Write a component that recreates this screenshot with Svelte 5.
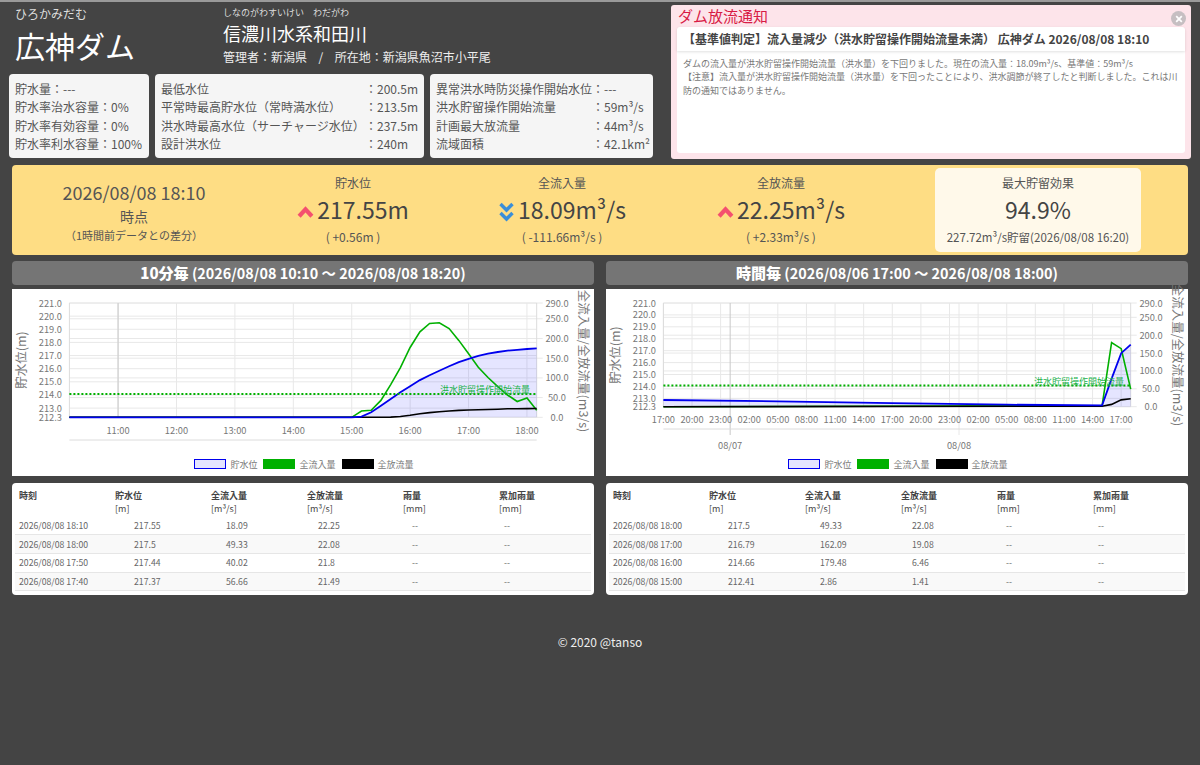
<script lang="ts">
  // hourly / ten-minute series for the two dam charts
  const tenMinInflow = [[0,0],[290,0],[300,16],[310,18],[320,43],[330,83],[340,126],[350,177],[360,217],[370,238],[380,240],[390,225],[400,195],[410,161],[420,127],[430,101],[440,78],[450,56.66],[460,40.02],[470,49.33],[480,18.09]];
  const tenMinLevel = [[0,212.3],[290,212.3],[300,212.35],[310,212.68],[320,213.18],[330,213.69],[340,214.2],[350,214.66],[360,215.13],[370,215.5],[380,215.84],[390,216.19],[400,216.5],[410,216.75],[420,216.98],[430,217.14],[440,217.27],[450,217.37],[460,217.44],[470,217.5],[480,217.55]];
  const tenMinOutflow = [[0,0],[330,0.5],[340,2],[350,5],[360,9],[370,12],[380,14],[390,16],[400,17.5],[410,18.4],[420,19.1],[430,19.8],[440,20.5],[450,21.49],[460,21.8],[470,22.08],[480,22.25]];

  const hourInflow = [[0,0],[46,2.86],[47,179.48],[48,162.09],[49,49.33]];
  const hourLevel = [[0,212.86],[12,212.75],[24,212.6],[36,212.47],[46,212.41],[47,214.66],[48,216.79],[49,217.5]];
  const hourOutflow = [[0,0],[46,1.41],[47,6.46],[48,19.08],[49,22.08]];

  const levelTicks = [221, 220, 219, 218, 217, 216, 215, 214, 213, 212.3];
  const flowTicks = [290, 250, 200, 150, 100, 50, 0];

  const charts = [
    {
      title: "10分毎",
      range: "(2026/08/08 10:10 〜 2026/08/08 18:20)",
      span: 480,
      bottom: 128.3,
      axisY: 151,
      tickY: 145,
      titleY: 71,
      rightTitleY: 72,
      xTicks: ["11:00", "12:00", "13:00", "14:00", "15:00", "16:00", "17:00", "18:00"].map((t, i) => ({ t, at: 50 + i * 60 })),
      dayLines: [{ t: "", at: 50, cls: "day" }],
      inflow: tenMinInflow,
      level: tenMinLevel,
      outflow: tenMinOutflow,
      rows: [
        ["2026/08/08 18:10", "217.55", "18.09", "22.25"],
        ["2026/08/08 18:00", "217.5", "49.33", "22.08"],
        ["2026/08/08 17:50", "217.44", "40.02", "21.8"],
        ["2026/08/08 17:40", "217.37", "56.66", "21.49"],
      ],
    },
    {
      title: "時間毎",
      range: "(2026/08/06 17:00 〜 2026/08/08 18:00)",
      span: 49,
      bottom: 117.7,
      axisY: 140,
      tickY: 134,
      titleY: 66,
      rightTitleY: 66,
      xTicks: ["17:00", "20:00", "23:00", "02:00", "05:00", "08:00", "11:00", "14:00", "17:00", "20:00", "23:00", "02:00", "05:00", "08:00", "11:00", "14:00", "17:00"].map((t, i) => ({ t, at: i * 3 })),
      dayLines: [{ t: "08/07", at: 7, cls: "day" }, { t: "08/08", at: 31, cls: "grid" }],
      inflow: hourInflow,
      level: hourLevel,
      outflow: hourOutflow,
      rows: [
        ["2026/08/08 18:00", "217.5", "49.33", "22.08"],
        ["2026/08/08 17:00", "216.79", "162.09", "19.08"],
        ["2026/08/08 16:00", "214.66", "179.48", "6.46"],
        ["2026/08/08 15:00", "212.41", "2.86", "1.41"],
      ],
    },
  ];

  const X0 = 57.4;
  const X1 = 524.7;
  const TOP = 14;

  const sx = (c, v) => X0 + (v / c.span) * (X1 - X0);
  const syLevel = (c, v) => TOP + ((221 - v) / 8.7) * (c.bottom - TOP);
  const syFlow = (c, v) => TOP + ((290 - v) / 290) * (c.bottom - TOP);
  const linePts = (c, data, sy) => data.map(([x, y]) => `${sx(c, x).toFixed(1)},${sy(c, y).toFixed(1)}`).join(" ");
  const areaPts = (c) => `${X0},${c.bottom} ${linePts(c, c.level, syLevel)} ${X1},${c.bottom}`;
</script>

<div class="page">
  <div class="top">
    <div class="top-left">
      <header class="head">
        <div class="dam">
          <div class="kana">ひろかみだむ</div>
          <h1>広神ダム</h1>
        </div>
        <div class="river">
          <div class="river-kana">しなのがわすいけい　わだがわ</div>
          <div class="river-name">信濃川水系和田川</div>
          <div class="river-sub">管理者&#xFF1A;新潟県<span class="sep">/</span>所在地&#xFF1A;新潟県魚沼市小平尾</div>
        </div>
      </header>
      <div class="infos">
        <div class="info info-a">
          <div>貯水量&#xFF1A;---</div>
          <div>貯水率治水容量&#xFF1A;0%</div>
          <div>貯水率有効容量&#xFF1A;0%</div>
          <div>貯水率利水容量&#xFF1A;100%</div>
        </div>
        <div class="info info-b">
          <span>最低水位</span><span>&#xFF1A;200.5m</span>
          <span>平常時最高貯水位&#xFF08;常時満水位&#xFF09;</span><span>&#xFF1A;213.5m</span>
          <span>洪水時最高水位&#xFF08;サーチャージ水位&#xFF09;</span><span>&#xFF1A;237.5m</span>
          <span>設計洪水位</span><span>&#xFF1A;240m</span>
        </div>
        <div class="info info-c">
          <span>異常洪水時防災操作開始水位</span><span>&#xFF1A;---</span>
          <span>洪水貯留操作開始流量</span><span>&#xFF1A;59m³/s</span>
          <span>計画最大放流量</span><span>&#xFF1A;44m³/s</span>
          <span>流域面積</span><span>&#xFF1A;42.1km²</span>
        </div>
      </div>
    </div>

    <aside class="alert">
      <div class="alert-title">ダム放流通知</div>
      <button class="close" aria-label="close">
        <svg viewBox="0 0 10 10" width="8" height="8"><path d="M1.5 1.5 8.5 8.5M8.5 1.5 1.5 8.5" stroke="#fff" stroke-width="2.2" /></svg>
      </button>
      <div class="alert-card">
        <div class="alert-head">【基準値判定】流入量減少&#xFF08;洪水貯留操作開始流量未満&#xFF09; 広神ダム 2026/08/08 18:10</div>
        <div class="alert-body">
          ダムの流入量が洪水貯留操作開始流量&#xFF08;洪水量&#xFF09;を下回りました。現在の流入量&#xFF1A;18.09m³/s、基準値&#xFF1A;59m³/s<br />
          【注意】流入量が洪水貯留操作開始流量&#xFF08;洪水量&#xFF09;を下回ったことにより、洪水調節が終了したと判断しました。これは川防の通知ではありません。
        </div>
      </div>
    </aside>
  </div>

  <section class="band">
    <div class="stat when">
      <div class="when-date">2026/08/08 18:10</div>
      <div class="when-at">時点</div>
      <div class="when-note">&#xFF08;1時間前データとの差分&#xFF09;</div>
    </div>
    <div class="stat">
      <div class="stat-label">貯水位</div>
      <div class="stat-value">
        <svg class="chev" viewBox="0 0 16 12"><path d="M2 10 8 3.5 14 10" fill="none" stroke="#f4506f" stroke-width="4" /></svg>217.55m
      </div>
      <div class="stat-diff">( +0.56m )</div>
    </div>
    <div class="stat">
      <div class="stat-label">全流入量</div>
      <div class="stat-value">
        <svg class="chev" viewBox="0 0 16 20"><path d="M2 2 8 8 14 2M2 11 8 17 14 11" fill="none" stroke="#3a8ed8" stroke-width="3.4" /></svg>18.09m³/s
      </div>
      <div class="stat-diff">( -111.66m³/s )</div>
    </div>
    <div class="stat">
      <div class="stat-label">全放流量</div>
      <div class="stat-value">
        <svg class="chev" viewBox="0 0 16 12"><path d="M2 10 8 3.5 14 10" fill="none" stroke="#f4506f" stroke-width="4" /></svg>22.25m³/s
      </div>
      <div class="stat-diff">( +2.33m³/s )</div>
    </div>
    <div class="stat best">
      <div class="stat-label">最大貯留効果</div>
      <div class="stat-value">94.9%</div>
      <div class="stat-diff">227.72m³/s貯留(2026/08/08 16:20)</div>
    </div>
  </section>

  <section class="columns">
    {#each charts as c}
      <div class="col">
        <h2 class="col-title"><b>{c.title}</b> {c.range}</h2>
        <div class="chart">
          <svg class="plot" width="582" height="165" viewBox="0 0 582 165">
            {#each c.xTicks as x}
              <line class="grid" x1={sx(c, x.at)} x2={sx(c, x.at)} y1={TOP} y2={c.bottom} />
            {/each}
            {#each levelTicks as v}
              <line class="grid" x1={X0} x2={X1} y1={syLevel(c, v)} y2={syLevel(c, v)} />
            {/each}
            {#each flowTicks as v}
              <line class="grid" x1={X0} x2={X1 + 6} y1={syFlow(c, v)} y2={syFlow(c, v)} />
            {/each}
            {#each c.dayLines as d}
              <line class={d.cls} x1={sx(c, d.at)} x2={sx(c, d.at)} y1={TOP} y2={c.span === 49 ? c.axisY + 6 : c.bottom} />
              {#if d.t}<text class="tick" x={sx(c, d.at)} y={c.axisY + 20} text-anchor="middle">{d.t}</text>{/if}
            {/each}
            <line class="frame" x1={X0} x2={X0} y1={TOP} y2={c.bottom} />
            <line class="frame" x1={X1} x2={X1} y1={TOP} y2={c.bottom} />
            <line class="frame" x1={X0} x2={X1} y1={c.axisY} y2={c.axisY} />

            <polygon points={areaPts(c)} fill="rgba(0,0,255,0.1)" />
            <polyline points={linePts(c, c.inflow, syFlow)} fill="none" stroke="#00b000" stroke-width="1.6" />
            <polyline points={linePts(c, c.outflow, syFlow)} fill="none" stroke="#000" stroke-width="1.6" />
            <polyline points={linePts(c, c.level, syLevel)} fill="none" stroke="#0000ee" stroke-width="1.8" />

            <line x1={X0} x2={X1} y1={syFlow(c, 59)} y2={syFlow(c, 59)} stroke="#00b000" stroke-width="2" stroke-dasharray="2 2" />
            <text class="limit" x="473" y={syFlow(c, 59) - 1} text-anchor="middle">洪水貯留操作開始流量</text>

            {#each levelTicks as v}
              <text class="tick" x="50" y={syLevel(c, v) + 3.5} text-anchor="end">{v.toFixed(1)}</text>
            {/each}
            {#each flowTicks as v}
              <text class="tick" x="545" y={syFlow(c, v) + 3.5} text-anchor="middle">{v.toFixed(1)}</text>
            {/each}
            {#each c.xTicks as x}
              <text class="tick" x={sx(c, x.at)} y={c.tickY} text-anchor="middle">{x.t}</text>
            {/each}

            <text class="axis-title" text-anchor="middle" transform="translate(14 {c.titleY}) rotate(-90)">貯水位(m)</text>
            <text class="axis-title" text-anchor="middle" transform="translate(567 {c.rightTitleY}) rotate(90)">全流入量/全放流量(m3/s)</text>
          </svg>
          <div class="legend">
            <span class="swatch level"></span><span>貯水位</span>
            <span class="swatch in"></span><span>全流入量</span>
            <span class="swatch out"></span><span>全放流量</span>
          </div>
        </div>
        <div class="table-wrap">
          <table class="data">
            <thead>
              <tr>
                <th>時刻</th>
                <th>貯水位<br /><i>[m]</i></th>
                <th>全流入量<br /><i>[m³/s]</i></th>
                <th>全放流量<br /><i>[m³/s]</i></th>
                <th>雨量<br /><i>[mm]</i></th>
                <th>累加雨量<br /><i>[mm]</i></th>
              </tr>
            </thead>
            <tbody>
              {#each c.rows as r}
                <tr>
                  {#each r as cell}<td>{cell}</td>{/each}
                  <td>--</td>
                  <td>--</td>
                </tr>
              {/each}
            </tbody>
          </table>
        </div>
      </div>
    {/each}
  </section>

  <footer class="foot">© 2020 @tanso</footer>
</div>

<style>
  :global(body) {
    margin: 0;
    background: #444;
  }

  .page {
    height: 765px;
    box-sizing: border-box;
    border-top: 2px solid #9a9a9a;
    background: #444;
    font-family: "Noto Sans CJK JP", "Noto Sans", sans-serif;
    color: #555;
    overflow: hidden;
  }

  .top {
    display: flex;
    height: 163px;
  }

  .top-left {
    width: 660px;
    flex: none;
  }

  .head {
    display: flex;
    height: 72px;
    color: #eee;
  }

  .dam {
    width: 208px;
    margin-left: 15px;
  }

  .kana {
    margin-top: 3px;
    font-size: 12px;
    line-height: 17px;
    color: #ddd;
  }

  h1 {
    margin: 1px 0 0;
    font-size: 30px;
    font-weight: 400;
    line-height: 44px;
    color: #fff;
  }

  .river-kana {
    margin-top: 5px;
    font-size: 9px;
    line-height: 12px;
    color: #ddd;
  }

  .river-name {
    margin-top: 1px;
    font-size: 18px;
    line-height: 26px;
    color: #fff;
  }

  .river-sub {
    margin-top: 1px;
    font-size: 12px;
    line-height: 19px;
  }

  .sep {
    margin: 0 11.5px;
  }

  .infos {
    display: flex;
    gap: 6px;
    margin-left: 9px;
  }

  .info {
    box-sizing: border-box;
    height: 84px;
    padding: 6px;
    border-radius: 4px;
    background: #f5f5f5;
    font-size: 12px;
    line-height: 18.3px;
    white-space: nowrap;
  }

  .info-a {
    width: 140px;
  }

  .info-b {
    display: grid;
    grid-template-columns: 204px 1fr;
    width: 269px;
  }

  .info-c {
    display: grid;
    grid-template-columns: 156px 1fr;
    width: 223px;
  }

  .alert {
    position: relative;
    box-sizing: border-box;
    width: 520px;
    height: 154px;
    margin: 3px 0 0 11px;
    padding: 0 6px;
    border-radius: 3px;
    background: #fde4ea;
  }

  .alert-title {
    height: 22px;
    padding-left: 1px;
    font-size: 15px;
    line-height: 22px;
    color: #d81b45;
  }

  .close {
    position: absolute;
    top: 6px;
    right: 5px;
    display: flex;
    align-items: center;
    justify-content: center;
    width: 15px;
    height: 15px;
    padding: 0;
    border: 0;
    border-radius: 50%;
    background: #c6bfc2;
  }

  .alert-card {
    height: 126px;
    border-radius: 3px;
    background: #fff;
  }

  .alert-head {
    height: 24px;
    padding-left: 6px;
    border-radius: 3px 3px 0 0;
    box-shadow: 0 1px 3px rgba(0, 0, 0, 0.12);
    font-size: 12px;
    font-weight: 700;
    line-height: 24px;
    color: #444;
    white-space: nowrap;
  }

  .alert-body {
    padding: 6px 6px;
    font-size: 9px;
    line-height: 13.4px;
    color: #777;
  }

  .band {
    display: grid;
    grid-template-columns: 244px 194px 224px 214px 300px;
    box-sizing: border-box;
    width: 1176px;
    height: 90px;
    margin-left: 12px;
    padding: 3px 0;
    border-radius: 4px;
    background: #fedd84;
    text-align: center;
    white-space: nowrap;
  }

  .when {
    padding-top: 12px;
  }

  .when-date {
    font-size: 18px;
    line-height: 25px;
  }

  .when-at {
    font-size: 14px;
    line-height: 22px;
  }

  .when-note {
    font-size: 11px;
    line-height: 16px;
  }

  .stat-label {
    margin-top: 6px;
    font-size: 12px;
    line-height: 18px;
  }

  .stat-value {
    margin-top: 1px;
    font-size: 23px;
    line-height: 32px;
    color: #444;
  }

  .chev {
    width: 17px;
    height: 20px;
    margin-right: 3px;
    vertical-align: -3px;
  }

  .stat-diff {
    margin-top: 3px;
    font-size: 12px;
    line-height: 18px;
  }

  .best {
    box-sizing: border-box;
    height: 84px;
    margin: 0 47px;
    border-radius: 5px;
    background: #fff9ea;
  }

  .best .stat-diff {
    font-size: 11.5px;
  }

  .columns {
    display: flex;
    gap: 12px;
    margin: 6px 0 0 12px;
  }

  .col {
    width: 582px;
  }

  .col-title {
    height: 24px;
    margin: 0 0 4px;
    border-radius: 4px;
    background: #757575;
    font-size: 14.4px;
    font-weight: 700;
    line-height: 24px;
    text-align: center;
    color: #fff;
  }

  .col-title b {
    font-size: 15px;
  }

  .chart {
    height: 187px;
    background: #fff;
  }

  .plot {
    display: block;
    overflow: visible;
  }

  .grid {
    stroke: #e8e8e8;
    stroke-width: 1;
  }

  .day {
    stroke: #c8c8c8;
    stroke-width: 1;
  }

  .frame {
    stroke: #dcdcdc;
    stroke-width: 1;
  }

  .tick {
    font-size: 9.3px;
    fill: #777;
  }

  .limit {
    font-size: 9px;
    fill: #22b14c;
  }

  .axis-title {
    font-size: 12.5px;
    fill: #777;
  }

  .legend {
    display: flex;
    align-items: center;
    justify-content: center;
    gap: 4px;
    height: 20px;
    font-size: 9px;
    color: #777;
  }

  .swatch {
    box-sizing: border-box;
    width: 32px;
    height: 10px;
    margin-left: 2px;
  }

  .swatch.level {
    border: 1.5px solid #00e;
    background: #e5e5ff;
  }

  .swatch.in {
    background: #00b000;
  }

  .swatch.out {
    background: #000;
  }

  .table-wrap {
    box-sizing: border-box;
    height: 112px;
    margin-top: 7px;
    padding: 0 3px;
    border-radius: 4px;
    background: #fff;
  }

  .data {
    width: 576px;
    border-collapse: collapse;
    table-layout: fixed;
    font-size: 8.7px;
  }

  th {
    height: 33px;
    padding: 6px 0 0 4px;
    box-sizing: border-box;
    font-size: 9px;
    font-weight: 700;
    line-height: 13px;
    text-align: left;
    vertical-align: top;
    color: #444;
  }

  th i {
    font-style: normal;
    font-weight: 400;
  }

  td {
    height: 18.7px;
    padding: 0 0 0 4px;
    box-sizing: border-box;
    border-bottom: 1px solid #e6e6e6;
    color: #666;
  }

  tbody tr:nth-child(even) {
    background: #f9f9f9;
  }

  td:nth-child(2) {
    padding-left: 23px;
  }

  td:nth-child(3) {
    padding-left: 19px;
  }

  td:nth-child(4) {
    padding-left: 15px;
  }

  td:nth-child(5) {
    padding-left: 13px;
  }

  td:nth-child(6) {
    padding-left: 9px;
  }

  .foot {
    margin-top: 38px;
    font-size: 12px;
    line-height: 18px;
    text-align: center;
    color: #eee;
  }
</style>
